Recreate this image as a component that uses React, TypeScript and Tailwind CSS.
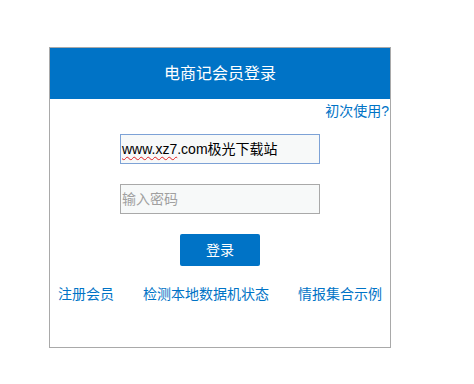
export default function App() {
  return (
    <div className="min-h-screen bg-white pt-[47px] pl-[49px] font-['Liberation_Sans','Noto_Sans_CJK_SC',sans-serif]">
      <div className="w-[342px] h-[301px] border border-[#a9a9a9] flex flex-col">
        {/* header */}
        <div className="h-[51px] bg-[#0073c6] flex items-center justify-center text-white text-[16px]">
          电商记会员登录
        </div>

        <div className="flex justify-end pr-[1px] mt-[4px] text-[14px] leading-[16px] text-[#0073c6]">
          <a href="#">初次使用?</a>
        </div>

        {/* account */}
        <div className="mt-[15px] mx-auto w-[200px] h-[30px] border border-[#7da2d6] bg-[#f7f9f9] flex items-center px-[1px] text-[14px] text-black">
          <span className="underline decoration-wavy decoration-[#e02020] decoration-1 underline-offset-2">www.xz7</span>
          <span>.com极光下载站</span>
        </div>

        {/* password */}
        <input
          type="password"
          placeholder="输入密码"
          className="mt-[20px] mx-auto w-[200px] h-[30px] border border-[#a9a9a9] bg-[#f7f9f9] px-[1px] text-[14px] placeholder:text-[#a0a0a0] outline-none"
        />

        <button className="mt-[20px] mx-auto w-[80px] h-[32px] rounded-[2px] bg-[#0073c6] text-white text-[14px]">
          登录
        </button>

        {/* links */}
        <div className="mt-[20px] px-[8px] flex justify-between text-[14px] leading-[16px] text-[#0073c6]">
          <a href="#">注册会员</a>
          <a href="#">检测本地数据机状态</a>
          <a href="#">情报集合示例</a>
        </div>
      </div>
    </div>
  );
}
